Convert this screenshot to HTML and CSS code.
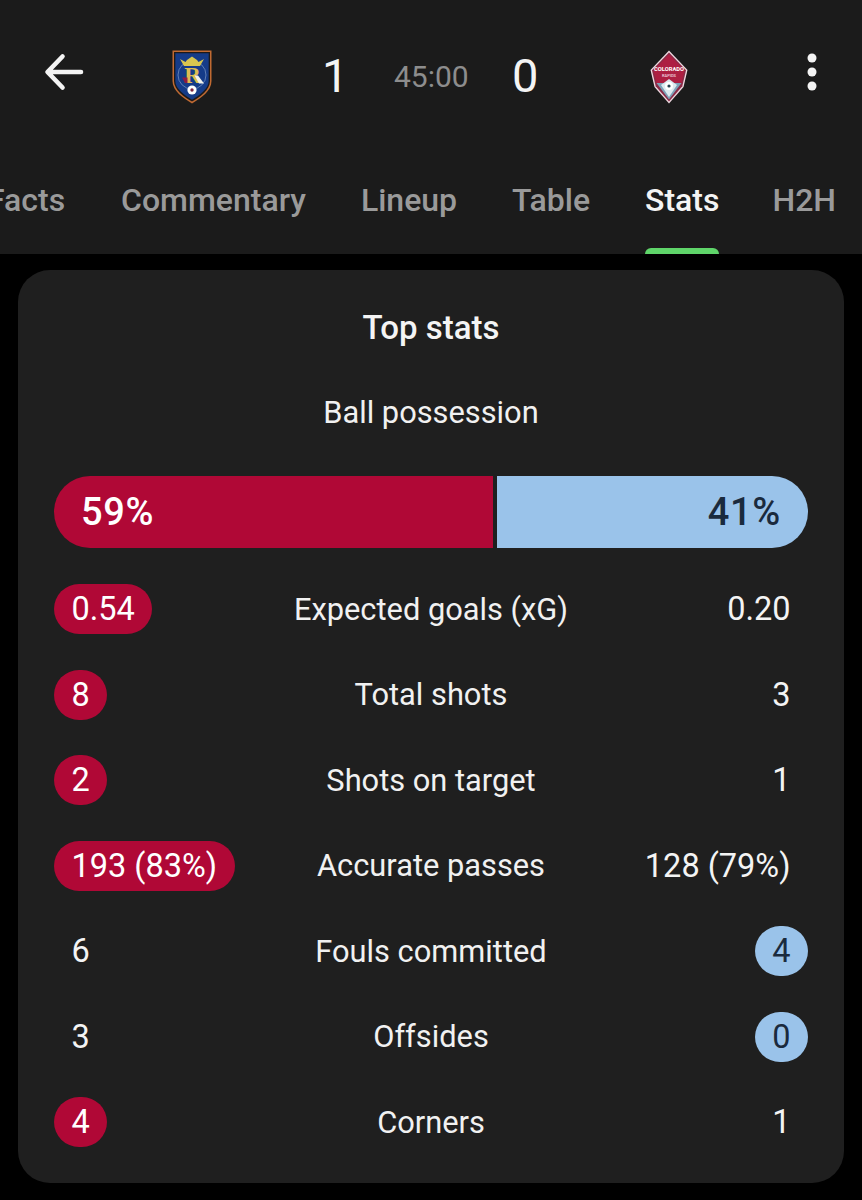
FILE: index.html
```html
<!DOCTYPE html>
<html lang="en">
<head>
<meta charset="utf-8">
<title>Match stats</title>
<link rel="stylesheet" href="styles.css">
</head>
<body>
<header class="top">
  <div class="match">
    <svg class="back" width="40" height="40" viewBox="0 0 40 40"><path d="M37 20H4M18.500 4.500 3.500 20l15 15.500" fill="none" stroke="#f4f4f4" stroke-width="4.600" stroke-linecap="round" stroke-linejoin="round"/></svg>
    <svg class="crest home" width="40" height="54" viewBox="0 0 40 54">
      <path d="M.5.500H39.500V31C39.500 41 29 48 20 53.500 11 48 .5 41 .5 31Z" fill="#c06a32"/>
      <path d="M2 2H38V31C38 40 28 47 20 51.500 12 47 2 40 2 31Z" fill="#1c1a1c"/>
      <path d="M3.300 3.300H36.700V31C36.700 39 27 45.500 20 49.800 13 45.500 3.300 39 3.300 31Z" fill="#153b88"/>
      <circle cx="20" cy="25" r="14" fill="none" stroke="#7f9bc6" stroke-width=".7"/>
      <path d="M8 9 13.500 12 15 10 20 6.500 25 10 26.500 12 32 9 28 16H12Z" fill="#d8c64f"/>
      <text class="crest-r" x="20.500" y="33" text-anchor="middle">R</text>
      <path d="M22.500 25.500H26L32 33.500H27Z" fill="#f1f1ec"/>
      <path d="M10 27.500H15.500V33H13Z" fill="#8a1c45"/>
      <circle cx="20" cy="40" r="4.600" fill="#fff"/>
      <circle cx="20" cy="40" r="1.700" fill="#7a2440"/>
    </svg>
    <div class="score">
      <span class="goal">1</span>
      <span class="clock">45:00</span>
      <span class="goal">0</span>
    </div>
    <svg class="crest away" width="38" height="54" viewBox="0 0 38 54">
      <path d="M19 .5 37.500 20 33.500 37 19 53.500 4.500 37 .5 20Z" fill="#eed9e0"/>
      <path d="M19 2.500 36 20.300 32.300 36.300 19 51.500 5.700 36.300 2 20.300Z" fill="#8a2a46"/>
      <path d="M19 4.200 34.500 20.500 31.500 33H6.500L3.500 20.500Z" fill="#ad1f42"/>
      <path d="M6.500 33H31.500L19 49.500Z" fill="#7ea2b8"/>
      <path d="M11 35 19 29 27 35 19 47Z" fill="#dce9ef"/>
      <circle cx="19" cy="36" r="4" fill="#fff"/>
      <circle cx="19" cy="36" r="1.600" fill="#24414f"/>
      <text class="crest-name" x="19" y="21" text-anchor="middle" textLength="30" lengthAdjust="spacingAndGlyphs">COLORADO</text>
      <text class="crest-sub" x="19" y="27" text-anchor="middle" textLength="14" lengthAdjust="spacingAndGlyphs">RAPIDS</text>
    </svg>
    <svg class="more" width="12" height="38" viewBox="0 0 12 38"><circle cx="6" cy="5" r="4.500" fill="#f4f4f4"/><circle cx="6" cy="19" r="4.500" fill="#f4f4f4"/><circle cx="6" cy="33" r="4.500" fill="#f4f4f4"/></svg>
  </div>
  <nav class="tabs">
    <span class="tab facts">Facts</span>
    <span class="tab">Commentary</span>
    <span class="tab">Lineup</span>
    <span class="tab">Table</span>
    <span class="tab active">Stats</span>
    <span class="tab last">H2H</span>
  </nav>
</header>
<main class="card">
  <h1 class="title">Top stats</h1>
  <p class="label poss-label">Ball possession</p>
  <div class="possession">
    <div class="side home-side">59%</div>
    <div class="side away-side">41%</div>
  </div>
  <div class="rows">
    <div class="row"><div class="cell"><span class="val red">0.54</span></div><span class="label">Expected goals (xG)</span><div class="cell right"><span class="val">0.20</span></div></div>
    <div class="row"><div class="cell"><span class="val red">8</span></div><span class="label">Total shots</span><div class="cell right"><span class="val">3</span></div></div>
    <div class="row"><div class="cell"><span class="val red">2</span></div><span class="label">Shots on target</span><div class="cell right"><span class="val">1</span></div></div>
    <div class="row"><div class="cell"><span class="val red">193 (83%)</span></div><span class="label">Accurate passes</span><div class="cell right"><span class="val">128 (79%)</span></div></div>
    <div class="row"><div class="cell"><span class="val">6</span></div><span class="label">Fouls committed</span><div class="cell right"><span class="val blue">4</span></div></div>
    <div class="row"><div class="cell"><span class="val">3</span></div><span class="label">Offsides</span><div class="cell right"><span class="val blue">0</span></div></div>
    <div class="row"><div class="cell"><span class="val red">4</span></div><span class="label">Corners</span><div class="cell right"><span class="val">1</span></div></div>
  </div>
</main>
</body>
</html>
```
FILE: styles.css
```css
* { box-sizing: border-box; }
html, body { margin: 0; padding: 0; }
body {
  width: 862px;
  height: 1200px;
  overflow: hidden;
  background: #000;
  color: #f4f4f4;
  font-family: Roboto, "Liberation Sans", sans-serif;
}
.top {
  height: 254px;
  background: #1b1b1b;
  overflow: hidden;
}
.match {
  height: 154px;
  display: flex;
  align-items: center;
  padding-left: 44px;
}
.back { flex: none; margin-bottom: 10px; }
.more { flex: none; margin-left: 118px; margin-bottom: 10px; }
.crest { flex: none; }
.home { margin-left: 88px; }
.away { margin-left: 112px; }
.crest-r { font: 700 23px "Liberation Serif", serif; fill: #dcbc52; }
.crest-name { font: 700 6px Roboto, sans-serif; fill: #fff; }
.crest-sub { font: 500 3.500px Roboto, sans-serif; fill: #f3d9e0; }
.score {
  padding-left: 110px;
  margin-bottom: 2px;
  display: flex;
  align-items: center;
}
.goal { font-size: 47px; line-height: 56px; width: 26px; text-align: center; }
.clock { font-size: 30px; color: #8d8d8d; margin: 0 45px 0 46px; width: 73px; text-align: center; }
.tabs {
  height: 100px;
  display: flex;
  padding-left: 121px;
  gap: 55px;
  position: relative;
}
.tab {
  position: relative;
  font-size: 32px;
  font-weight: 500;
  color: #9a9a9a;
  line-height: 92px;
  white-space: nowrap;
}
.facts { position: absolute; left: -13px; top: 0; }
.last { margin-left: -2px; }
.active { color: #f4f4f4; }
.active::after {
  content: "";
  position: absolute;
  left: 0;
  right: 0;
  bottom: 0;
  height: 6px;
  background: #5fd56a;
  border-radius: 6px 6px 0 0;
}
.card {
  margin: 16px 18px 0;
  height: 913px;
  background: #1f1f1f;
  border-radius: 32px;
  padding: 36px 36px 0;
}
.title {
  margin: 0;
  font-size: 33px;
  line-height: 44px;
  font-weight: 500;
  text-align: center;
}
.label { font-size: 30.800px; color: #f1f1f1; text-align: center; }
.poss-label { margin: 41px 0 0; line-height: 44px; }
.possession {
  display: flex;
  gap: 4px;
  margin-top: 41px;
  height: 72px;
}
.side {
  font-size: 38px;
  letter-spacing: .7px;
  font-weight: 500;
  line-height: 72px;
}
.home-side {
  width: 439px;
  background: #b00836;
  color: #fff;
  padding-left: 27px;
  border-radius: 36px 0 0 36px;
}
.away-side {
  flex: 1;
  background: #9ac3ea;
  color: #1a2a3d;
  padding-right: 27px;
  text-align: right;
  border-radius: 0 36px 36px 0;
}
.rows {
  margin-top: 36px;
  display: flex;
  flex-direction: column;
  gap: 35.500px;
}
.row {
  display: grid;
  grid-template-columns: 1fr auto 1fr;
  align-items: center;
  height: 50px;
}
.cell { display: flex; }
.right { justify-content: flex-end; }
.val {
  font-size: 32.500px;
  line-height: 50px;
  height: 50px;
  min-width: 53px;
  padding: 0 17.500px;
  text-align: center;
  border-radius: 25px;
  white-space: nowrap;
}
.red { background: #b00836; color: #fff; }
.blue { background: #9ac3ea; color: #1a2a3d; }
```
